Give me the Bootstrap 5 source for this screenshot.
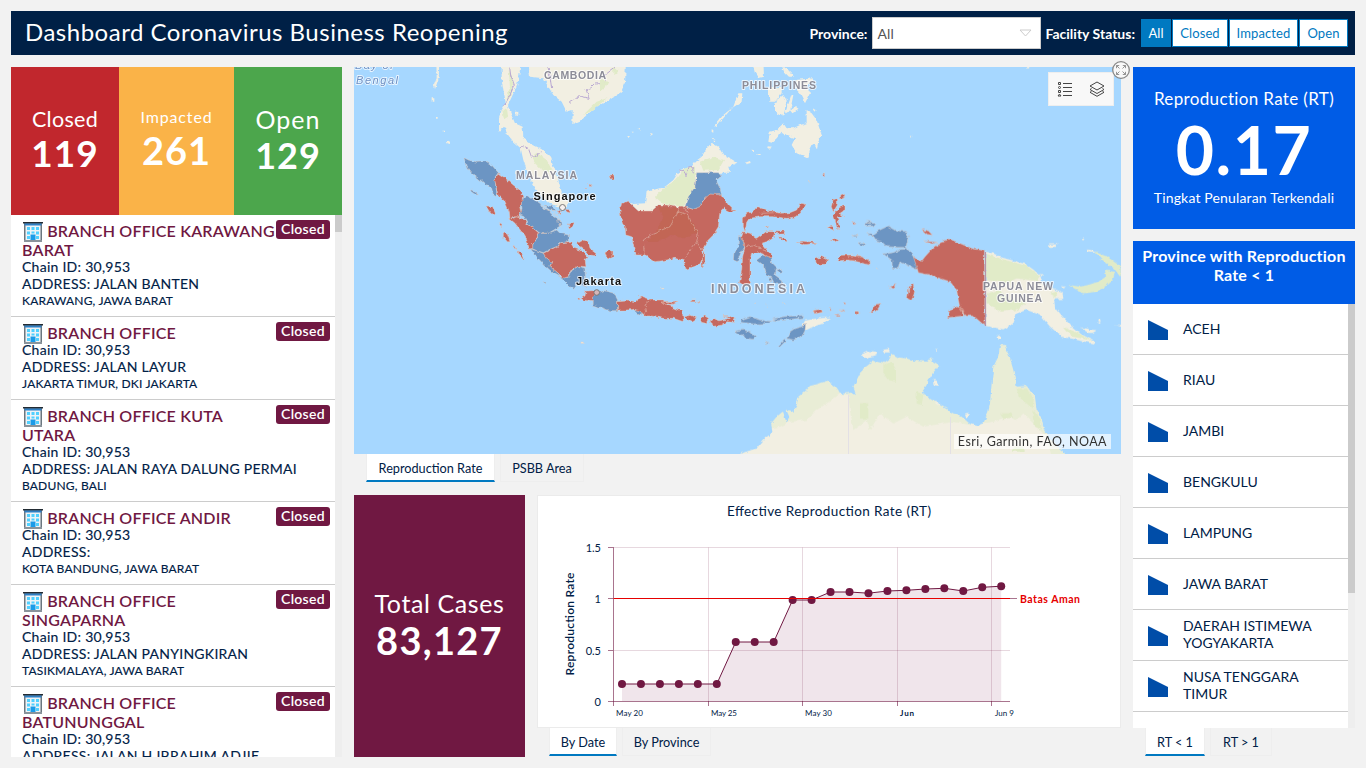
<!DOCTYPE html>
<html lang="en">
<head>
<meta charset="utf-8">
<meta name="viewport" content="width=device-width, initial-scale=1">
<title>Dashboard Coronavirus Business Reopening</title>
<link href="https://cdn.jsdelivr.net/npm/bootstrap@5.3.0/dist/css/bootstrap.min.css" rel="stylesheet">
<style>
:root{--navy:#002046;--wine:#701842;--royal:#005ce6;--link:#0079c1}
body{background:#f2f2f2;color:var(--navy);font-family:Lato,"Liberation Sans",sans-serif;font-size:14px;line-height:17px;overflow:hidden}
.dash{height:768px;padding:11px;gap:12px}
.topbar{height:44px;flex:none;background:var(--navy);color:#fff;padding:0 7px 0 14px}
.topbar h1{font-size:24px;font-weight:400;letter-spacing:.5px;line-height:30px;margin:0 0 2px}
.lbl{font-size:14px;font-weight:700}
.pick{width:169px;height:32px;border:1px solid #ccc;color:#555;font-size:14px;letter-spacing:.1px}
.btn-st{height:28px;border:1px solid var(--link);border-radius:0;background:#fff;color:var(--link);font-size:13px;letter-spacing:.1px;padding:0;line-height:26px}
.btn-st.on{background:var(--link);color:#fff}
.leftcol{width:331px}.rightcol{width:222px}
.kpis{height:148px;flex:none}
.kpi{color:#fff;width:108px}
.kpi b{letter-spacing:1px;display:block}
.k1{background:#c1272d}.k2{background:#fab348;width:115px}.k3{background:#4ca64c}
.sites{background:#fff;min-height:0}
.track{width:7px;background:#eee}
.thumb{width:7px;background:#cbcbcb}
.site{height:83px;border-bottom:1px solid #ccc;padding:6px 5px 0 11px;position:relative;letter-spacing:.26px;flex:none}
.site.tall{height:102px}
.site h2{font-size:16px;line-height:19px;font-weight:600;color:var(--wine);margin:0 0 -1px;letter-spacing:.2px;width:262px;font-family:Lato,sans-serif}
.site svg{vertical-align:0;margin:-5px 0 -5px 1px}
.site p{margin:0;font-size:14px;white-space:nowrap;-webkit-text-stroke:.15px}
.site p.loc{font-size:12px;letter-spacing:.18px}
.tag{position:absolute;right:5px;top:5px;width:54px;height:19px;border-radius:3px;background:var(--wine);color:#fff;text-align:center;font-size:14px;line-height:18px;letter-spacing:.3px;font-weight:600}
.mapbox{height:387px;flex:none;position:relative}
.mapbox>svg{display:block}
.tools{position:absolute;right:7px;top:5px;width:66px;height:34px;background:#f8f8f8;border:1px solid #eee}
.expand{position:absolute;right:-10px;top:-7px}
.credit{position:absolute;right:10px;bottom:5px;height:15px;line-height:15px;padding:0 4px;background:rgba(255,255,255,.68);color:#323232;font-size:12.5px;letter-spacing:.45px;white-space:nowrap}
.tabs{height:28px;flex:none;gap:5px}
.tabs span{height:28px;border:1px solid #eee;border-top:0;text-align:center;font-size:12.7px;line-height:28px;white-space:nowrap}
.tabs .on{background:#fff;border-bottom:2px solid var(--link)}
.cases{width:171px;background:var(--wine);color:#fff}
.chart{background:#fff;height:233px;outline:1px solid #ebebeb;outline-offset:-1px}
.chart svg{display:block}
.rt{height:162px;flex:none;background:var(--royal);color:#fff}
.rthead{height:63px;flex:none;background:var(--royal);color:#fff;font-size:16px;letter-spacing:.22px;font-weight:700;line-height:19px;padding-top:5px;white-space:nowrap}
.prov{height:424px;flex:none;background:#fff}
.prow{height:51px;flex:none;border-bottom:1px solid #ccc;padding-left:15px}
.prow svg{margin-right:15px;margin-top:2px}
.prow span{width:145px;margin-top:-2px}
.lb{font-family:"Liberation Sans",sans-serif;font-weight:700;paint-order:stroke;stroke:#fff;stroke-opacity:.75;stroke-width:2px;stroke-linejoin:round}
.nat{fill:#8c8c98;font-size:10.5px}
.r{fill:#c5675f}.b{fill:#6c95c3}.l{fill:#f2efe2}.g{fill:#e1ebc8}
.bd{fill:none;stroke:#bbaad2;stroke-width:3}
.idn path{stroke:#e6cfc2;stroke-width:1.4}
.idn path.shade{stroke:none;fill:#c0654f;opacity:.6}
</style>
</head>
<body>
<div class="dash d-flex flex-column">
 <header class="topbar d-flex align-items-center">
  <h1>Dashboard Coronavirus Business Reopening</h1>
  <div class="ms-auto d-flex align-items-center">
   <span class="lbl" style="margin-right:5px">Province:</span>
   <div class="pick bg-white d-flex align-items-center justify-content-between px-1"><span>All</span><svg width="13" height="8" class="me-1"><path d="M1 1H12L6.500 7Z" fill="none" stroke="#ccc"/></svg></div>
   <span class="lbl ms-1" style="margin-right:6px">Facility Status:</span>
   <div class="d-flex" style="gap:1px"><button class="btn btn-st on" style="width:30px">All</button><button class="btn btn-st" style="width:56px">Closed</button><button class="btn btn-st" style="width:69px">Impacted</button><button class="btn btn-st" style="width:49px">Open</button></div>
  </div>
 </header>
 <div class="d-flex flex-grow-1" style="gap:12px;min-height:0">
  <section class="leftcol d-flex flex-column">
   <div class="kpis d-flex text-center">
    <div class="kpi k1"><div style="font-size:21.500px;line-height:27px;margin-top:39px;letter-spacing:.3px">Closed</div><b style="font-size:37px;line-height:39px">119</b></div>
    <div class="kpi k2"><div style="font-size:16px;line-height:24px;margin-top:38px;letter-spacing:.85px">Impacted</div><b style="font-size:38px;line-height:42px">261</b></div>
    <div class="kpi k3"><div style="font-size:25px;line-height:28px;margin-top:38px;letter-spacing:1px">Open</div><b style="font-size:36px;line-height:44px">129</b></div>
   </div>
   <div class="sites d-flex flex-grow-1 overflow-hidden">
    <div id="sites" class="d-flex flex-column flex-grow-1"></div>
    <div class="track"><div class="thumb" style="height:17px"></div></div>
   </div>
  </section>
  <section class="flex-grow-1 d-flex flex-column" style="width:767px">
   <div class="mapbox">
<svg width="767" height="387" viewBox="354 67 767 387">
<defs><filter id="coast" x="354" y="60" width="770" height="400" filterUnits="userSpaceOnUse"><feTurbulence type="fractalNoise" baseFrequency=".22" numOctaves="2" seed="4"/><feDisplacementMap in="SourceGraphic" scale="4" xChannelSelector="R" yChannelSelector="G"/></filter>
<clipPath id="aus"><use href="#ausland"/></clipPath></defs>
<rect x="354" y="67" width="767" height="387" fill="#a6d7ff"/>
<g filter="url(#coast)">
<g transform="translate(350 60) scale(.33333)">
<path class="l" d="M455 0V60L462 100 468 130 455 150 447 175V215L462 200 472 222 490 245 512 265 520 300 530 330 545 365 560 390 575 410 600 430 625 442H650L653 425 645 405 635 395 628 370 615 330 600 290 575 268 545 252 520 235 518 200 495 190 482 160 474 135 488 105 500 80 508 45 512 0ZM535 0L540 50 580 55 595 80 610 105 635 125 650 155 668 150 667 195 690 185 710 165 740 140 780 118 815 95 825 70 828 0ZM259 0H268L266 55 255 88 252 75 260 55ZM245 115h8v10h-8ZM258 170h5v6h-5ZM277 212h8v5h-8ZM290 240l10 5v7l-8-2ZM496 155h9v9h-9ZM499 330l4 12-4 10Z"/>
<path class="g" d="M545 290L560 278 590 300 606 330 592 338 570 325 555 310ZM476 25L490 60 484 105 468 125 480 80ZM457 150l14-5 3 25-12 8ZM700 165l40-40 30-10-40 35ZM790 20l15 15-15 10Z"/>
<path class="bd" d="M476 0L482 45 493 75 480 105 463 137M512 265L520 258 535 265 545 292 560 285 575 275M590 0L600 50 605 85M658 128L680 115 685 108 718 115 708 88 725 82 735 72 765 70V45L795 22"/>
<g class="idn">
<path class="b" d="M342 293L355 300 380 307 410 305 425 315 445 338 436 350 437 375 440 395V410L430 405 425 385 405 372 385 355 365 340 350 320ZM360 388l15 8 10 8-8 0-12-8ZM512 420L530 410 545 415 570 430 580 445 595 450 610 470 630 480 635 495 615 508 595 520H570L545 500 530 485 522 470 510 465 516 445ZM567 520H595L620 510 630 520 655 525V545L635 548 620 560 600 568 580 578 560 572 545 565 550 548 560 540ZM542 567L560 572 580 580 592 595 605 605 600 618 620 635 630 650 610 640 580 612 560 590ZM685 618L705 625 707 680 690 672H680L668 688 650 670 630 652H655L665 632ZM580 668l8 1-2 5ZM582 436l25 3 8 12-15 0ZM622 478l12 8-6 12Z"/>
<path fill="none" d="M575 435l15 15 15 0 10 10M610 460l12 5 8 15M625 488l10 15"/>
<path class="r" d="M445 340L470 358 490 375 515 395 518 410 512 440 515 455 507 465 510 472 490 470 480 477 478 455 465 425 443 403 440 385 434 360ZM480 477L500 470 512 475 525 480 530 490 545 500 567 520 558 540 548 550V565L538 567 530 540 515 515 495 490ZM580 580L600 570 620 560 640 548 660 545 672 565 695 572 712 590 705 600 708 620 685 618 665 630 655 650 640 655 620 635 600 620 605 605 590 595ZM683 550L700 540 715 545 720 565 738 578 735 590 718 588 705 570 690 560ZM765 580l12-8 12 5V592l-15 5ZM408 438l20 2 8 20-5 8-12-12ZM448 488l8 5-3 12ZM460 518l12 5 8 22h-8l-12-15ZM490 556l8 5 2 8ZM505 572l10 8 8 15-5 2-12-15ZM622 452l10 4-4 8ZM645 448l18 2v8l-12-2ZM655 492l20-5-5 10-12 10ZM702 382l6 1-2 4ZM716 373l8 2-4 6ZM693 715L705 708 708 693 730 692 742 700 730 708 728 725 700 720ZM682 712l9 5-5 3Z"/>
</g></g>
<g class="idn" transform="translate(350 250) scale(.33333)">
<path class="b" d="M726 165L728 138 742 130 765 122 792 130 803 150V182H780L750 172Z"/>
<path class="r" d="M803 152L830 150 860 155 870 138 890 145 905 150H940L950 165 985 180H997L1000 215 970 205 940 205 905 198H880L865 185 855 178 830 180H803ZM935 156L985 155 970 163 945 162ZM1000 202l20-6 20 8-15 12ZM1052 207l12-9 12 7-8 15-14-3ZM1078 217l15-11 12 6 13-2 20-5-20-8 16 0 22 8-5 12-20-2-15 10-22 4ZM1025 150h12v5h-12ZM1042 153l8 2-2 3Z"/>
<path class="b" d="M850 178l20 4 8 12-12-3Z"/>
<path fill="none" d="M905 150L885 165 890 185 876 195"/>
<path class="l" d="M693 276h10v4h-10ZM935 112h7v5h-7Z"/>
</g>
<g transform="translate(600 60) scale(.33333)">
<path class="l" d="M88 425L115 453H155L175 435 230 442H255L265 410 287 380 290 338H390L385 320 412 308 395 298 370 285 355 260 335 248 320 265 305 290 285 305 275 320 240 330 220 360 195 380 140 395 135 430 100 432ZM345 195L370 165 400 140 415 100H427L425 125 395 145 370 175 350 198ZM455 0H490L492 50 475 55 465 40ZM545 15l25 20 12 15h-15l-15-15ZM505 85L545 80V100L525 125 508 125ZM530 120L550 105 560 120 550 170 525 155V135ZM555 160L575 105 580 105 570 155ZM570 150L585 138 597 148 577 160ZM585 60L640 55 620 80 630 100 615 130 600 100 590 90ZM505 245L510 215 530 210 550 190 560 205H580L600 195 620 190V150L635 160 650 180 665 225 655 245 650 270 640 250 630 270 625 295 590 280 575 255 585 235 560 225 545 215 530 235 515 248ZM435 308l15-5 2 6-15 4ZM470 284l15-4-5 6ZM502 258l14 2-8 6ZM455 268l7 5-5 2ZM335 208l5 2v8l-5-2ZM338 236l8 3-2 6ZM82 228l8 0-5 6ZM112 206l8 0-2 6ZM150 218l8 3-2 8ZM95 215l6 0-2 4ZM640 145l10 5-4 5Z"/>
<path class="g" d="M285 320L260 322 245 335 220 365 190 385 165 410 190 432 250 440 265 410 285 380ZM300 305L340 290 372 300 355 330 310 332ZM0 60l25 5-10 20-15 10Z"/>
<path class="bd" d="M238 330L253 335 258 350 268 318 278 323 280 340"/>
<g class="idn">
<path class="r" d="M60 450L65 430 85 420 95 435 115 453H155L175 435H200L230 442 255 440 280 448 305 430 325 402 350 400 370 412 385 435 405 455H390L370 445 360 455 355 500 340 525 320 545 310 565 305 600 300 612 258 628 250 602 225 595 200 600 165 605 135 585H108L100 555 95 530 78 525 75 500 65 485ZM305 595l10-20 0 30-8 18ZM15 578l15-8 8 15-15 10ZM30 345h12v12h-8Z"/>
<path class="shade" d="M175 440L225 445 262 465 280 490 295 520 250 535 215 525 170 545 140 545 165 520 180 490 190 470Z"/>
<path fill="none" d="M133 585L130 540 160 520 210 500 235 455 265 465 275 490 295 520 290 545 250 600M290 550L300 565 320 570M230 460L242 440 258 448 268 462"/>
<path class="b" d="M290 338H355L365 350 348 360 360 385 365 405 330 402 310 420 300 440 280 448 255 440 265 410 285 380ZM415 530H428L435 560 422 580 412 605 400 600 402 575 415 565ZM470 600L490 585 512 590 515 610 530 625 525 645 545 660V675L520 665 515 650 495 640 490 615ZM530 630l18-4-3 16ZM505 652l10 4-2 14Z"/>
<path class="r" d="M430 475L440 460 460 455 470 440 500 450 540 460 570 458 590 450 600 430 615 432 605 455 590 470 560 475 520 470 480 470 450 475 440 490 435 515 430 500ZM430 515L450 520 470 535 495 515 525 515 520 530 500 545 485 550 500 570 520 590 505 590 475 575 455 580 450 600V670L430 678 418 670 425 630 428 590 435 560 425 530ZM525 512l25 1 5 8-20 2ZM535 530l20 3 8 12-12-3ZM495 503l12-4-4 4ZM588 546l22-2 45 4-40 6ZM645 597l20-7 20 10-10 13-25 0ZM694 440l5-20 13-5v20l-12 20ZM722 405l12-5v12l-12 5ZM700 465L715 445 735 435V450L720 460 735 470H712L715 490 722 510 710 500 705 480ZM682 502l18-4 4 14ZM690 540l20-5 8 5-14 5ZM668 345l5-10v15ZM624 360l6 8ZM710 603L718 586 755 585 780 588V603L740 600ZM640 752l28-2 4 6-28 5ZM190 725l45-1-20 7-25 2ZM550 728l6 5Z"/>
<path fill="none" d="M435 560L460 555 500 575M480 460L530 458"/>
</g></g>
<g transform="translate(850 60) scale(.33333)">
<path class="l" d="M407 575L430 580 455 592 490 602 525 612 545 625 570 645 578 672 610 688 637 695 640 717 612 718 615 740 630 760 660 795 690 820 730 842 735 852 680 840 635 830 600 800 570 765 530 750 500 760 490 790 460 808 407 798ZM593 553h30l-5 8h-20ZM710 568l20 4 10 6-25 0ZM695 535l8 2-4 6ZM530 20l10 0-5 10ZM182 228l5 0-2 6ZM690 802l25 5 15 12-15 0ZM795 795h20v6ZM745 778l6 0v10l-5 0ZM443 825l8 5-4 10ZM570 640l8 5-3 5ZM636 678l10 4-5 4ZM715 808l25 3-12 8Z"/>
<path class="g" d="M655 675L690 680 715 675 745 665 768 650 765 632 795 635 790 655 765 680 740 695 700 700 680 690ZM735 576L772 590 812 620V652L792 625 757 600ZM407 582L460 598 530 618 570 648 560 662 500 655 470 668 407 660ZM410 700L450 690 480 720 530 725 500 750 450 755 410 730ZM600 700l20-6 0 20ZM640 800l50 22 35 20-60-12Z"/>
<g class="idn">
<path class="b" d="M68 525L85 512 115 498 140 512 170 515 175 530 168 560 176 572 190 590 205 618 200 628 170 615 150 605 145 625H128L125 600 100 582 130 578 150 568 168 568 164 562 145 562 110 560 95 545 75 540ZM45 490l30 0-5 8-25 0ZM22 548l22 0-3 10ZM50 518l15 0 5 15ZM5 526l20 0-10 4ZM50 484l12 2-8 5Z"/>
<path class="r" d="M275 545L297 537 330 550 365 565 403 573 405 798 370 768H345L330 745 325 720 320 690 300 665 270 655 240 645 205 638 200 620 190 590 205 603H215L225 590 250 562ZM292 773L300 750 320 740 335 745 340 768ZM-5 587L30 590 55 600 58 615 40 610 15 602-5 600ZM215 508l20 5 12 12-15-2ZM220 543l45 4-20 4ZM172 715l5-35 12-8 5 25-10 25ZM62 758l15-25 16-3-10 18-13 10ZM15 755h10l-2 8ZM5 487l12 1-2 6ZM118 682l18-8-4 12ZM78 623l6 8ZM-30 750h12l2 5Z"/>
<path fill="none" d="M333 740L342 752 335 772"/>
</g></g>
<g transform="translate(740 270) scale(.33333)">
<path id="ausland" fill="#e9edd6" d="M0 552L50 535 75 505 98 487 93 460 110 440 128 425 140 458 148 440 138 418 160 425 170 405 175 380 200 360 210 348 235 342 262 332 285 350 300 372 335 368 348 375 340 350 355 320 365 300 385 285 400 272 430 280 450 265 455 250 475 262 500 265 520 272 560 275 572 262 580 275 598 285 570 320 560 345 545 368 560 380 600 405 640 430 665 440 690 462 710 468 730 460 745 425 750 400 755 340 760 290 775 260 780 225H795L810 265 820 300 830 350 860 348 885 380 890 420 905 445 912 480 930 510 970 545 985 575H0Z"/>
<path clip-path="url(#aus)" class="l" d="M0 580V490L120 470 150 455 200 450 230 420 260 400 300 372 325 375 330 420 340 480 380 450 390 480 420 430 460 460 500 440 550 470 640 455 690 465 760 455 800 440 830 450 850 430 890 470 920 500 940 580Z"/>
<path class="g" d="M430 285L455 275 468 300V335L445 330 430 310ZM360 400h25v45h-25ZM530 365l20 10-5 30-15-5ZM830 355l30 0 22 30-5 30-40-35ZM780 430l30 0 10 12-30 5ZM880 420l20 30 5 30-20-10ZM815 530h35l5 15h-35Z"/>
<path class="l" d="M362 255L387 243 412 246 407 258 382 266ZM425 240l22-3 3 10h-20ZM580 330l10 2 7 16-17-3ZM568 315l8 5-2 5ZM675 430l15-2-10 18ZM585 395l16 5-2 6-12-4ZM188 165L195 152 230 145 270 143 250 160 220 170 195 182ZM770 200l12 0 0 8-10 0ZM587 236l5 3-3 4Z"/>
<g class="idn"><path class="b" d="M0 150L30 140 60 150 95 155 85 160 40 162 5 157ZM95 148L130 140 190 136V143L150 148 110 152ZM-15 183L10 180 30 185 47 200 40 208 20 205 0 192ZM197 163L185 170 165 175 150 185 140 205 160 210 185 200 195 182ZM115 228l15-18 8 2-18 18ZM78 217h8l-4 5Z"/><path class="r" d="M218 124l22-6 12 5-18 6ZM268 115l6 3-3 5ZM280 135l22 2-8 3ZM345 125l10 0 2 5-8 3ZM310 98h6v6ZM45 98l6 2ZM78 103l4 8Z"/></g>
</g></g>
<path d="M985.500 252V326" stroke="#b493ab" stroke-width="1.200"/>
<path d="M848.500 395V454M950.500 417V454" stroke="#e3e0e5"/>
<g class="lb">
<g class="nat"><text x="544" y="79" textLength="62">CAMBODIA</text><text x="742" y="89" textLength="74">PHILIPPINES</text><text x="516" y="179" textLength="61">MALAYSIA</text><text x="983" y="290" textLength="70">PAPUA NEW</text><text x="997" y="302" textLength="45">GUINEA</text><text x="711" y="293" textLength="94" style="font-size:12.500px">INDONESIA</text></g>
<g fill="#6c8fc4" font-style="italic" font-size="11" style="font-weight:400"><text x="355" y="69" textLength="38">Bay of</text><text x="356" y="84" textLength="42">Bengal</text></g>
<g fill="#111" font-size="11"><text x="533.500" y="200" textLength="62">Singapore</text><text x="576" y="285" textLength="45">Jakarta</text></g></g>
<g fill="#f6f0ee" stroke="#777"><circle cx="562.500" cy="207.500" r="3"/><circle cx="596.700" cy="292.500" r="2.800" fill="#d5b6b9"/></g>
</svg>
    <div class="tools d-flex align-items-center justify-content-around"><svg width="16" height="16" fill="none" stroke="#444"><path d="M6 2.500H15M6 6.500H15M6 10.500H15M6 14.500H15"/><path d="M1.500 1.500h2v2h-2ZM1.500 9.500h2v2h-2Z"/><circle cx="2.500" cy="6.500" r="1"/><path d="M1 15L2.500 13 4 15Z"/></svg><svg width="18" height="18" fill="none" stroke="#444"><path d="M9 2L16 6 9 10 2 6ZM3.500 8.500L2 9.500 9 13.500 16 9.500 14.500 8.500M3.500 11.300L2 12.300 9 16.300 16 12.300 14.500 11.300"/></svg></div>
    <svg class="expand" width="20" height="20" fill="none" stroke="#888"><circle cx="10" cy="10" r="8.300" fill="#f8f8f8" stroke-width="1.300"/><path d="M5.500 8.200V5.500H8.200M5.500 5.500L8.500 8.500M11.800 5.500H14.500V8.200M14.500 5.500L11.500 8.500M5.500 11.800V14.500H8.200M5.500 14.500L8.500 11.500M14.500 11.800V14.500H11.800M14.500 14.500L11.500 11.500" stroke-width=".9"/></svg>
    <div class="credit">Esri, Garmin, FAO, NOAA</div>
   </div>
   <div class="tabs d-flex" style="padding-left:12px"><span class="on" style="width:129px">Reproduction Rate</span><span style="width:84px">PSBB Area</span></div>
   <div class="d-flex flex-grow-1" style="gap:12px;margin-top:13px">
    <div class="cases text-center"><div style="font-size:25px;line-height:30px;margin-top:93px;letter-spacing:.6px">Total Cases</div><b class="d-block" style="font-size:38px;line-height:45px;letter-spacing:1.300px">83,127</b></div>
    <div class="flex-grow-1">
     <div class="chart"><svg id="plot" width="584" height="233" viewBox="537 495 584 233" fill="#002046" font-size="11"></svg></div>
     <div class="tabs d-flex" style="padding-left:12px"><span class="on" style="width:68px">By Date</span><span style="width:89px">By Province</span></div>
    </div>
   </div>
  </section>
  <aside class="rightcol d-flex flex-column">
   <div class="rt text-center"><div style="font-size:17px;line-height:22px;margin-top:21px;letter-spacing:.35px">Reproduction Rate (RT)</div><b class="d-block" style="font-size:66px;line-height:79px;letter-spacing:1.500px">0.17</b><div style="font-size:14px;line-height:18px;letter-spacing:.16px">Tingkat Penularan Terkendali</div></div>
   <div class="rthead text-center" style="margin-top:12px">Province with Reproduction<br>Rate &lt; 1</div>
   <div class="prov d-flex overflow-hidden"><div id="prov" class="flex-grow-1 d-flex flex-column"></div><div class="track"><div class="thumb" style="height:289px"></div></div></div>
   <div class="tabs d-flex" style="padding-left:12px"><span class="on" style="width:60px">RT &lt; 1</span><span style="width:62px">RT &gt; 1</span></div>
  </aside>
 </div>
</div>
<script src="https://cdn.jsdelivr.net/npm/bootstrap@5.3.0/dist/js/bootstrap.bundle.min.js"></script>
<script>
const office='<svg width="20" height="20"><path fill="#6b777f" d="M1 1H19V19H1Z"/><path fill="#eef3f6" d="M2.500 3H17.500V18H2.500Z"/><path fill="#222b33" d="M0 0H20V1.500H0Z"/><path fill="#2f7fc4" d="M1.500 1.500H18.500V3.500H1.500Z"/><path fill="#50d0ff" d="M4 5h3v3H4ZM8.500 5h3v3h-3ZM13 5h3v3h-3ZM4 9.500h3v3H4ZM8.500 9.500h3v2h-3ZM13 9.500h3v3h-3ZM4 14h3v3H4ZM13 14h3v3h-3Z"/><path fill="#1b9be8" d="M7.500 12.500h5V19h-5Z"/><path fill="#8a949b" d="M1 18H19V20H1Z"/></svg>';
const sites=[['BRANCH OFFICE KARAWANG','BARAT','JALAN BANTEN','KARAWANG, JAWA BARAT'],['BRANCH OFFICE','','JALAN LAYUR','JAKARTA TIMUR, DKI JAKARTA'],['BRANCH OFFICE KUTA','UTARA','JALAN RAYA DALUNG PERMAI','BADUNG, BALI'],['BRANCH OFFICE ANDIR','','','KOTA BANDUNG, JAWA BARAT'],['BRANCH OFFICE','SINGAPARNA','JALAN PANYINGKIRAN','TASIKMALAYA, JAWA BARAT'],['BRANCH OFFICE','BATUNUNGGAL','JALAN H IBRAHIM ADJIE','']];
document.getElementById('sites').innerHTML=sites.map(s=>`<article class="site ${s[1]?'tall':''}"><h2 class="text-nowrap">${office} ${s[0]}${s[1]?'<br>'+s[1]:''}</h2><p>Chain ID: 30,953</p><p>ADDRESS: ${s[2]}</p><p class="loc">${s[3]}</p><span class="tag">Closed</span></article>`).join('');
document.getElementById('prov').innerHTML=['ACEH','RIAU','JAMBI','BENGKULU','LAMPUNG','JAWA BARAT','DAERAH ISTIMEWA YOGYAKARTA','NUSA TENGGARA TIMUR'].map(p=>`<div class="prow d-flex align-items-center"><svg width="20" height="20"><path fill="#004da8" d="M0 0L20 10V20H0Z"/></svg><span>${p}</span></div>`).join('');
const ys=[684,684,684,684,684,684,642,642,642,600,600,592,592,593.2,591,590.3,589,588.3,591,587.3,586.2];
const pts=ys.map((y,i)=>[622+i*18.96,y]),line=pts.map(p=>p.join(' ')).join('L');
let s='<text x="829" y="516" text-anchor="middle" font-size="13.500" textLength="204">Effective Reproduction Rate (RT)</text>';
s+='<g stroke="#701842" stroke-opacity=".17">'+[547.5,650.5].map(y=>`<path d="M613.500 ${y}H1010"/>`).join('')+[708.5,802.5,897.5,991.5].map(x=>`<path d="M${x} 547.500V701"/>`).join('')+'</g>';
s+=`<path d="M622 701L${line}V701Z" fill="#7a1048" fill-opacity=".11"/>`;
s+='<g stroke="#701842" stroke-opacity=".6"><path fill="none" d="M613.500 547V706M608 701.500H1010M608 547.500h5M608 598.500h5M608 650.500h5M708.500 701v5M802.500 701v5M897.500 701v5M991.500 701v5M1010 598.500h7"/></g>';
s+=`<path d="M${line}" fill="none" stroke="#701842"/>`+pts.map(p=>`<circle cx="${p[0]}" cy="${p[1]}" r="4" fill="#701842"/>`).join('');
s+='<path d="M613.500 598.500H1010" stroke="#e60000" stroke-width="1.200"/><text x="1020" y="603" fill="#e60000" font-size="10.500" font-weight="700" textLength="60">Batas Aman</text>';
s+=[['1.5',552],['1',603],['0.5',655],['0',706]].map(t=>`<text x="601" y="${t[1]}" text-anchor="end">${t[0]}</text>`).join('');
s+=[['May 20',616,27],['May 25',711,26],['May 30',805,27],['Jun',900,14],['Jun 9',995,19]].map(t=>`<text x="${t[1]}" y="716" font-size="8" font-weight="${t[0]=='Jun'?700:400}" textLength="${t[2]}">${t[0]}</text>`).join('');
s+='<text transform="translate(574 624) rotate(-90)" text-anchor="middle" font-size="12" font-weight="600" textLength="103">Reproduction Rate</text>';
document.getElementById('plot').innerHTML=s;
</script>
</body>
</html>
